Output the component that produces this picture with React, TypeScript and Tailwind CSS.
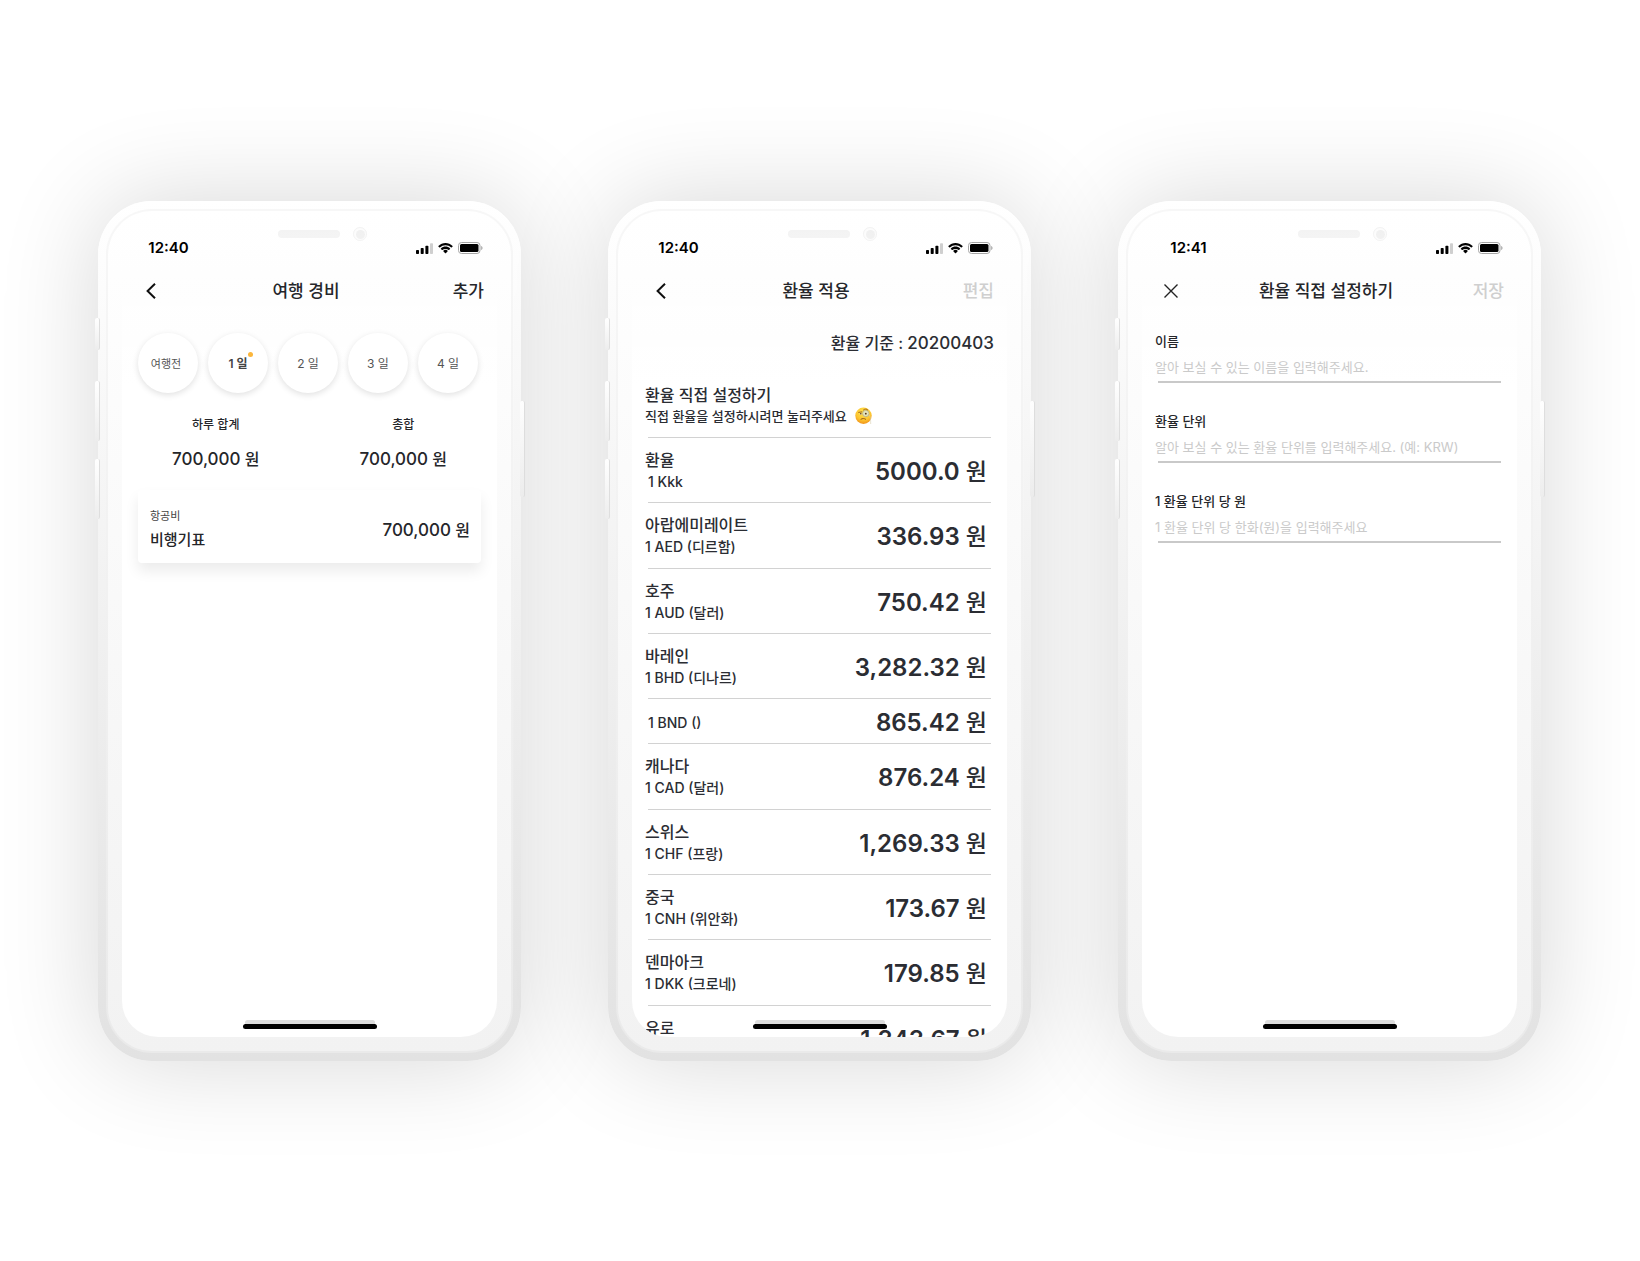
import type { ReactNode } from "react";

type PhoneProps = { time: string; title: string; action: string; muted?: boolean; close?: boolean; children: ReactNode };

const hardwareButtons = [
  "-left-[3px] top-[117px] h-8",
  "-left-[3px] top-[180px] h-[60px]",
  "-left-[3px] top-[258px] h-[60px]",
  "-right-1 top-[200px] h-24",
];

function StatusIcons() {
  return (
    <div className="flex items-center gap-[5px]">
      <svg width="17" height="11" viewBox="0 0 17 11" aria-hidden="true">
        <rect x="0" y="7" width="3" height="4" rx="0.8" />
        <rect x="4.7" y="5" width="3" height="6" rx="0.8" />
        <rect x="9.4" y="2.7" width="3" height="8.3" rx="0.8" />
        <rect x="14" y="0.3" width="3" height="10.7" rx="0.8" fill="#cfcfcf" />
      </svg>
      <svg width="15" height="11" viewBox="0 0 15 11" aria-hidden="true">
        <path d="M7.5 2.3c2.1 0 4.1.8 5.6 2.3.1.1.3.1.4 0l1.1-1.1c.2-.1.2-.4 0-.5C10.700-.9 4.300-.9.4 3c-.2.1-.2.400 0 .5l1.100 1.100c.1.1.3.1.4 0A8.100 8.100 0 0 1 7.500 2.300Z" />
        <path d="M7.500 5.900c1.200 0 2.300.4 3.100 1.200.1.1.3.1.4 0l1.100-1.100c.2-.2.2-.4 0-.6-2.600-2.400-6.600-2.400-9.200 0-.2.200-.2.400 0 .6L4 7.100c.1.100.3.100.4 0a4.600 4.600 0 0 1 3.100-1.200Z" />
        <path d="M9.700 8.200c.1-.1.100-.3 0-.5a3.400 3.400 0 0 0-4.400 0c-.1.200-.1.400 0 .5l1.900 2c.200.1.4.1.6 0Z" />
      </svg>
      <svg width="25" height="12" viewBox="0 0 25 12" aria-hidden="true">
        <rect x="0.5" y="0.5" width="21.500" height="11" rx="3" fill="none" stroke="#a6a6a6" />
        <rect x="2" y="2" width="18.500" height="8" rx="1.500" />
        <path d="M23.200 4v4c.8-.3 1.300-1.100 1.300-2s-.5-1.700-1.300-2Z" fill="#a6a6a6" />
      </svg>
    </div>
  );
}

function MonocleFace() {
  return (
    <svg role="img" aria-label="🧐" width="18" height="18" viewBox="0 0 18 18">
      <defs>
        <radialGradient id="face" cx="0.5" cy="0.3" r="0.75">
          <stop offset="0" stopColor="#ffe34d" />
          <stop offset="0.6" stopColor="#fdc62f" />
          <stop offset="1" stopColor="#ee8a17" />
        </radialGradient>
      </defs>
      <circle cx="8.500" cy="8.700" r="8.200" fill="url(#face)" />
      <circle cx="10.800" cy="6.500" r="3.200" fill="#e3e4bd" stroke="#b9ad82" strokeWidth="0.800" />
      <circle cx="5.700" cy="6.700" r="1.200" fill="#f4e3a0" />
      <circle cx="5.800" cy="6.800" r="0.800" fill="#5a3415" />
      <circle cx="10.800" cy="6.700" r="0.900" fill="#5a3415" />
      <path d="M3.700 5.400 6.800 4.900M8.500 2.900c1.200-1.100 3-1.100 4.200 0" stroke="#9a5a14" strokeWidth="0.900" fill="none" strokeLinecap="round" />
      <path d="M6 12.200c1.500-.9 3.200-.9 4.600 0" stroke="#8a4a10" strokeWidth="0.900" fill="none" strokeLinecap="round" />
      <path d="M14.200 7.500c1.300 2.500 1.500 6 1.500 9.500" stroke="#d9cfae" strokeWidth="0.600" fill="none" />
    </svg>
  );
}

function Phone({ time, title, action, muted, close, children }: PhoneProps) {
  return (
    <section className="relative w-[423px] shrink-0 rounded-[54px] bg-linear-to-b from-white to-[#e2e2e2] p-2 shadow-[0_0_100px_rgba(0,0,0,0.16)]">
      {hardwareButtons.map((place) => (
        <span key={place} className={`absolute w-[5px] rounded-xs border-r border-[#dedede] bg-linear-to-b from-white to-[#ededed] ${place}`} />
      ))}
      <div className="relative rounded-[46px] border-2 border-black/3 bg-linear-to-b from-white to-[#f2f2f2] bg-origin-border p-[14px]">
        <span className="absolute left-[170px] top-[19px] h-2 w-[62px] rounded-full bg-[#f3f3f3]" />
        <span className="absolute left-[245px] top-4 grid size-[14px] place-items-center rounded-full border border-[#f2f2f2] bg-[#fcfcfc]">
          <span className="size-[9px] rounded-full bg-[#f0f0f0]" />
        </span>
        <div className="relative flex h-[812px] flex-col overflow-hidden rounded-[36px] bg-linear-to-b from-transparent to-white to-20%">
          <div className="flex h-11 shrink-0 items-center justify-between pl-5 pr-[14px] pt-[2px]">
            <span className="w-[53px] text-center text-[15px] leading-5 font-semibold text-black">{time}</span>
            <StatusIcons />
          </div>
          <header className="grid h-11 shrink-0 grid-cols-[1fr_auto_1fr] items-center pl-[6px] pr-[13px] text-[17px] leading-6 font-medium">
            <button type="button" aria-label={close ? "닫기" : "뒤로"} className="grid h-11 w-[46px] place-items-center">
              {close ? (
                <svg width="14" height="14" viewBox="0 0 14 14" fill="none" stroke="#222" strokeWidth="1.400"><path d="m0.500 0.500 13 13M13.500 0.500l-13 13" /></svg>
              ) : (
                <svg width="10" height="16" viewBox="0 0 10 16" fill="none" stroke="#111" strokeWidth="2"><path d="M9 0.800 1.600 8 9 15.200" /></svg>
              )}
            </button>
            <h1>{title}</h1>
            <button type="button" disabled={muted} className={muted ? "justify-self-end text-[#cfcfcf]" : "justify-self-end"}>{action}</button>
          </header>
          {children}
          <span className="absolute bottom-3 left-[123px] h-[5px] w-[130px] rounded-full bg-[#dedede]" />
          <span className="absolute bottom-2 left-[121px] h-[5px] w-[134px] rounded-full bg-black" />
        </div>
      </div>
    </section>
  );
}

function Won({ value, large }: { value: string; large?: boolean }) {
  return (
    <span className={large ? "pt-1 text-2xl leading-8 font-semibold" : "text-[17px] leading-6 font-medium"}>
      {value}
      <span className={large ? "text-[23px] font-medium" : "text-base"}> 원</span>
    </span>
  );
}

function Expenses() {
  return (
    <div className="flex flex-col px-4 pt-5">
      <div className="flex gap-[10px]">
        {["여행전", "1 일", "2 일", "3 일", "4 일"].map((day, i) => (
          <button key={day} type="button" className={`relative size-[60px] rounded-full bg-white pt-[2px] shadow-[0_2px_6px_rgba(0,0,0,0.12)] ${i === 0 ? "pr-1 text-[11px] text-[#555]" : i === 1 ? "text-xs font-semibold text-[#444]" : "text-xs text-[#555]"}`}>
            {day}
            {i === 1 && <span className="absolute right-[15px] top-[19px] size-[5px] rounded-full bg-[#fbb63c]" />}
          </button>
        ))}
      </div>
      <dl className="-mx-4 flex pt-5 text-center">
        {["하루 합계", "총합"].map((label) => (
          <div key={label} className="flex flex-1 flex-col items-center gap-[10px]">
            <dt className="text-xs leading-6 font-medium">{label}</dt>
            <dd><Won value="700,000" /></dd>
          </div>
        ))}
      </dl>
      <article className="mt-[19px] flex items-center justify-between rounded bg-white pl-3 pr-[11px] pt-4 pb-[9px] shadow-[0_8px_14px_rgba(0,0,0,0.08)]">
        <div>
          <p className="text-[11px] leading-5 text-[#444]">항공비</p>
          <h2 className="text-[15px] leading-7 font-medium">비행기표</h2>
        </div>
        <Won value="700,000" />
      </article>
    </div>
  );
}

const rates = [
  ["환율", "1 Kkk", "5000.0"],
  ["아랍에미레이트", "1 AED (디르함)", "336.93"],
  ["호주", "1 AUD (달러)", "750.42"],
  ["바레인", "1 BHD (디나르)", "3,282.32"],
  ["", "1 BND ()", "865.42"],
  ["캐나다", "1 CAD (달러)", "876.24"],
  ["스위스", "1 CHF (프랑)", "1,269.33"],
  ["중국", "1 CNH (위안화)", "173.67"],
  ["덴마아크", "1 DKK (크로네)", "179.85"],
  ["유로", "1 EUR (유로)", "1,343.67"],
];

function Rates() {
  return (
    <div className="flex flex-col text-[#2b2d33]">
      <p className="px-[13px] pt-[18px] text-right text-base leading-6 font-medium">
        환율 기준 : <span className="text-[17px]">20200403</span>
      </p>
      <button type="button" className="mt-[29px] px-[13px] text-left">
        <span className="block text-base leading-[22px] font-medium">환율 직접 설정하기</span>
        <span className="flex items-center gap-2 text-[13px] leading-5 font-medium">직접 환율을 설정하시려면 눌러주세요 <MonocleFace /></span>
      </button>
      <ul className="mt-[11px] flex min-h-[633px] flex-col">
        {rates.map(([name, unit, value]) => (
          <li key={unit} className={name ? "flex flex-1 flex-col" : "flex h-[45px] flex-col"}>
            <hr className="mx-4 border-[#d2d2d2]" />
            <div className="flex flex-1 items-center justify-between pl-[13px] pr-5">
              <div className={name ? "" : "pt-1"}>
                {name && <h2 className="text-base leading-6 font-medium">{name}</h2>}
                <p className={name && name !== "환율" ? "text-sm leading-5 font-medium" : "pl-[3px] text-sm leading-5 font-medium"}>{unit}</p>
              </div>
              <Won value={value} large />
            </div>
          </li>
        ))}
      </ul>
    </div>
  );
}

const fields = [
  ["name", "이름", "알아 보실 수 있는 이름을 입력해주세요."],
  ["unit", "환율 단위", "알아 보실 수 있는 환율 단위를 입력해주세요. (예: KRW)"],
  ["amount", "1 환율 단위 당 원", "1 환율 단위 당 한화(원)을 입력해주세요"],
];

function CustomRate() {
  return (
    <form className="flex flex-col gap-[26px] px-4 pt-4">
      {fields.map(([id, label, hint]) => (
        <div key={id} className="border-b-2 border-[#c9c9c9]">
          <label htmlFor={id} className="-ml-[3px] block text-[13px] leading-6 font-medium">{label}</label>
          <input id={id} placeholder={hint} className="-ml-[3px] block h-7 w-full text-[13px] outline-none placeholder:text-[#cacaca]" />
        </div>
      ))}
    </form>
  );
}

export default function App() {
  return (
    <main className="flex min-h-screen items-center justify-center gap-[87px] overflow-hidden bg-white pt-px pr-px font-['Inter','Noto_Sans_CJK_KR',sans-serif] text-[#25262a]">
      <Phone time="12:40" title="여행 경비" action="추가"><Expenses /></Phone>
      <Phone time="12:40" title="환율 적용" action="편집" muted><Rates /></Phone>
      <Phone time="12:41" title="환율 직접 설정하기" action="저장" muted close><CustomRate /></Phone>
    </main>
  );
}
